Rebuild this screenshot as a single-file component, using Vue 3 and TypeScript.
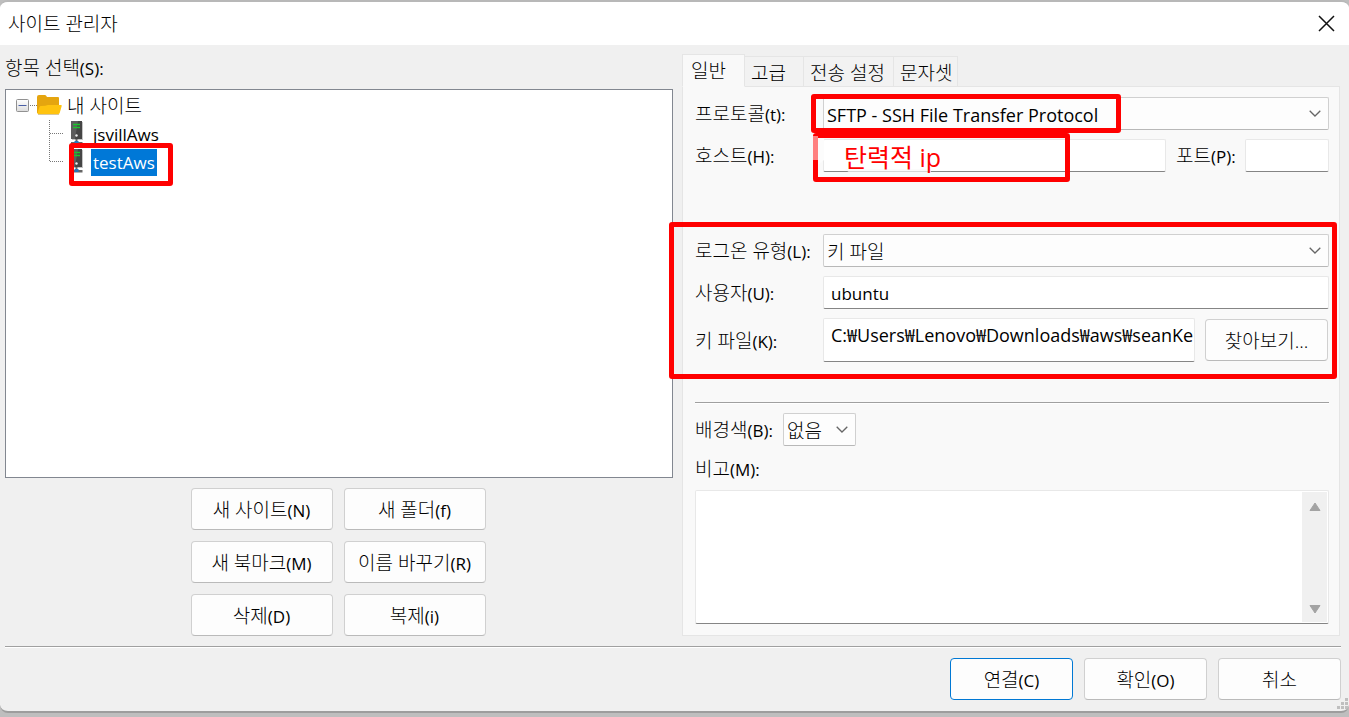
<script setup lang="ts">
import { ref } from 'vue'

interface Action {
  text: string
  mnemonic: string
  primary?: boolean
}

const sites = ['jsvillAws', 'testAws']
const selectedSite = ref('testAws')

const siteActions: Action[] = [
  { text: '새 사이트', mnemonic: '(N)' },
  { text: '새 폴더', mnemonic: '(f)' },
  { text: '새 북마크', mnemonic: '(M)' },
  { text: '이름 바꾸기', mnemonic: '(R)' },
  { text: '삭제', mnemonic: '(D)' },
  { text: '복제', mnemonic: '(i)' },
]

const dialogActions: Action[] = [
  { text: '연결', mnemonic: '(C)', primary: true },
  { text: '확인', mnemonic: '(O)' },
  { text: '취소', mnemonic: '' },
]

const tabs = [
  { text: '일반', size: 'w1' },
  { text: '고급', size: 'w2' },
  { text: '전송 설정', size: 'w3' },
  { text: '문자셋', size: 'w4' },
]
const activeTab = ref('일반')

const host = ref('')
const port = ref('')
const user = ref('ubuntu')
const keyFile = ref('C:₩Users₩Lenovo₩Downloads₩aws₩seanKey')
const notes = ref('')
</script>

<template>
  <div class="desktop">
    <main class="dialog">
      <header class="titlebar">
        <h1>사이트 관리자</h1>
        <button class="close" type="button" aria-label="닫기">
          <svg width="17" height="17" viewBox="0 0 17 17">
            <path d="M1 1L16 16M16 1L1 16" fill="none" stroke="#111" stroke-width="1.5" />
          </svg>
        </button>
      </header>

      <div class="columns">
        <section class="left">
          <h2 id="tree-label">항목 선택<span class="mn">(S):</span></h2>
          <ul class="tree" role="tree" aria-labelledby="tree-label">
            <li role="treeitem" aria-expanded="true">
              <div class="node root">
                <svg width="21" height="28" viewBox="0 0 21 28">
                  <defs>
                    <linearGradient id="expander" x1="0" y1="0" x2="0" y2="1">
                      <stop offset="0" stop-color="#fff" />
                      <stop offset="1" stop-color="#dcdcdc" />
                    </linearGradient>
                  </defs>
                  <rect x=".5" y="7.500" width="12" height="12" rx="1" fill="url(#expander)" stroke="#919191" />
                  <path d="M2.500 13.500h8" stroke="#4a5fa5" />
                  <path d="M14 13.500h7" stroke="#777" stroke-dasharray="1 1" />
                </svg>
                <svg width="25" height="28" viewBox="0 0 25 28">
                  <path d="M0 5q0-2 2-2h6q1 0 2 2h11q1 0 1 1v15H0z" fill="#e5a50f" />
                  <path d="M4 14q5 0 7-1h13q1 0 .7 1l-2 7q-.4 1-1.500 1H1.500Q0 22 .4 21l2-6q.4-1 1.600-1z" fill="#ffc30f" />
                  <path d="M1 22.500h21" stroke="#d7c69b" />
                </svg>
                <span class="name">내 사이트</span>
              </div>
              <ul role="group">
                <li
                  v-for="(site, i) in sites"
                  :key="site"
                  role="treeitem"
                  class="child"
                  :aria-selected="site === selectedSite"
                  @click="selectedSite = site"
                >
                  <div class="node">
                    <svg width="20" height="28" viewBox="0 0 20 28">
                      <path
                        :d="i < sites.length - 1 ? 'M.5 0V28' : 'M.5 0V14'"
                        stroke="#777"
                        stroke-dasharray="1 1"
                      />
                      <path d="M1 13.500h14" stroke="#777" stroke-dasharray="1 1" />
                    </svg>
                    <svg width="16" height="28" viewBox="0 0 16 28">
                      <path d="M3 2h11v18H3z" fill="#c4c4c4" />
                      <path d="M2 1h11v18H2z" fill="#454545" />
                      <path d="M2 1h7L6 19H2z" fill="#5c5c5c" />
                      <path d="M4 4.500h7M4 7.500h7" stroke="#19c52b" stroke-width="1.500" />
                      <circle cx="7.500" cy="15.500" r="1.200" fill="#eee" />
                      <path d="M6.500 19h2v3h5v2.500H2V22h4.500z" fill="#666" />
                      <path d="M5.500 21h4v3h-4z" fill="#2477ba" />
                    </svg>
                    <span class="latin" :class="{ selected: site === selectedSite }">{{ site }}</span>
                  </div>
                  <i v-if="site === 'testAws'" class="mark mark-site"></i>
                </li>
              </ul>
            </li>
          </ul>
          <div class="site-actions">
            <button v-for="a in siteActions" :key="a.text" type="button" class="btn">
              <span>{{ a.text }}<span class="mn">{{ a.mnemonic }}</span></span>
            </button>
          </div>
        </section>

        <section class="right">
          <div class="tabs" role="tablist">
            <button
              v-for="t in tabs"
              :key="t.text"
              type="button"
              role="tab"
              :aria-selected="t.text === activeTab"
              :class="['tab', t.size, { active: t.text === activeTab }]"
              @click="activeTab = t.text"
            >
              {{ t.text }}
            </button>
          </div>

          <form class="panel" @submit.prevent>
            <div class="rows server">
              <div class="row">
                <label for="protocol">프로토콜<span class="mn">(t):</span></label>
                <div class="combo grow">
                  <select id="protocol" class="wide"><option>SFTP - SSH File Transfer Protocol</option></select>
                  <svg class="chev" width="12" height="7" viewBox="0 0 12 7"><path d="M.7.700L6 6L11.300.700" /></svg>
                  <i class="mark mark-protocol"></i>
                </div>
              </div>
              <div class="row">
                <label for="host">호스트<span class="mn">(H):</span></label>
                <div class="host grow">
                  <input id="host" v-model="host" type="text" />
                  <div class="mark mark-host">
                    <svg class="smear" width="130" height="49" viewBox="0 0 130 49">
                      <path d="M0 3h5v24H0z" fill="#fff" fill-opacity=".5" />
                      <path d="M5 5h6v22l-6 5z" fill="#fcfcfc" />
                      <path d="M32 36h86v4H60l-14 4-6-1z" fill="#fafafa" fill-opacity=".7" />
                    </svg>
                    <span>탄력적 ip</span>
                  </div>
                </div>
                <label for="port" class="port-label">포트<span class="mn">(P):</span></label>
                <input id="port" v-model="port" class="port" type="text" />
              </div>
            </div>

            <div class="rows logon">
              <div class="row">
                <label for="logon">로그온 유형<span class="mn">(L):</span></label>
                <div class="combo grow">
                  <select id="logon"><option>키 파일</option></select>
                  <svg class="chev" width="12" height="7" viewBox="0 0 12 7"><path d="M.7.700L6 6L11.300.700" /></svg>
                </div>
              </div>
              <div class="row">
                <label for="user">사용자<span class="mn">(U):</span></label>
                <input id="user" v-model="user" class="grow" type="text" />
              </div>
              <div class="row">
                <label for="key">키 파일<span class="mn">(K):</span></label>
                <input id="key" v-model="keyFile" class="grow tall wide" type="text" />
                <button type="button" class="btn browse">찾아보기...</button>
              </div>
              <i class="mark mark-logon"></i>
            </div>

            <hr />

            <div class="color-row">
              <label for="color">배경색<span class="mn">(B):</span></label>
              <div class="combo">
                <select id="color"><option>없음</option></select>
                <svg class="chev" width="12" height="7" viewBox="0 0 12 7"><path d="M.7.700L6 6L11.300.700" /></svg>
              </div>
            </div>
            <label for="notes" class="notes-label">비고<span class="mn">(M):</span></label>
            <div class="notes">
              <textarea id="notes" v-model="notes"></textarea>
              <div class="scroll">
                <svg width="12" height="10" viewBox="0 0 12 10"><path d="M6 1L11 8.500H1z" /></svg>
                <svg width="12" height="10" viewBox="0 0 12 10"><path d="M6 9L11 1.500H1z" /></svg>
              </div>
            </div>
          </form>
        </section>
      </div>

      <footer>
        <button
          v-for="a in dialogActions"
          :key="a.text"
          type="button"
          :class="['btn', { primary: a.primary }]"
        >
          <span>{{ a.text }}<span class="mn">{{ a.mnemonic }}</span></span>
        </button>
      </footer>
      <svg class="grip" width="12" height="12" viewBox="0 0 12 12" fill="#bfbfbf">
        <path d="M8 0h3v3H8zM4 4h3v3H4zM8 4h3v3H8zM0 8h3v3H0zM4 8h3v3H4zM8 8h3v3H8z" />
      </svg>
    </main>
  </div>
</template>

<style>
body {
  margin: 0;
  background: #bebebe;
}
</style>

<style scoped>
* {
  box-sizing: border-box;
}
.desktop {
  min-height: 100vh;
  display: flex;
  padding-bottom: 5px;
  background: #bebebe;
  color: #000;
  font: 300 19px/24px 'Open Sans', 'Noto Sans CJK KR', sans-serif;
}
button,
input,
select,
textarea {
  font: inherit;
  color: inherit;
  margin: 0;
}
.mn,
.latin,
input {
  font-size: 17px;
  font-weight: 400;
}
h1,
h2 {
  margin: 0;
  font: inherit;
}
ul {
  list-style: none;
  margin: 0;
  padding: 0;
}
.dialog {
  position: relative;
  flex: 1;
  display: flex;
  flex-direction: column;
  background: #f0f0f0;
  border-top: 2px solid #b8b8b8;
  border-bottom: 2px solid #9d9d9d;
  border-radius: 8px;
  overflow: hidden;
}
.titlebar {
  height: 43px;
  display: flex;
  align-items: center;
  justify-content: space-between;
  padding: 0 14px 0 8px;
  background: #fff;
}
.close {
  display: flex;
  padding: 0;
  border: 0;
  background: none;
}
.columns {
  flex: 1;
  display: flex;
  gap: 9px;
  padding: 0 9px 10px 5px;
}
.left {
  flex: 668 1 0;
  min-width: 0;
  display: flex;
  flex-direction: column;
}
.left h2 {
  height: 44px;
  padding-top: 11px;
}
.tree {
  flex: 1;
  padding: 2px 0 0 10px;
  border: 1px solid #828790;
  background: #fff;
}
.node {
  display: flex;
  height: 28px;
  align-items: center;
}
.node svg {
  flex: none;
}
.name {
  padding-left: 5px;
}
.child {
  position: relative;
  margin-left: 33px;
}
.child .latin {
  height: 27px;
  line-height: 27px;
  margin-left: 6px;
  padding: 0 2px;
}
.child .selected {
  background: #0078d7;
  color: #fff;
}
.site-actions {
  display: grid;
  grid-template-columns: 142px 142px;
  justify-content: center;
  gap: 11px;
  padding: 10px 2px 0 0;
}
.btn {
  height: 42px;
  padding: 2px 0 0;
  border: 1px solid #d0d0d0;
  border-bottom-color: #bababa;
  border-radius: 4px;
  background: #fdfdfd;
}
.btn.primary {
  border-color: #0078d4;
}
.right {
  flex: 658 1 0;
  min-width: 0;
  display: flex;
  flex-direction: column;
  padding-top: 9px;
}
.tabs {
  display: flex;
  align-items: flex-end;
  height: 33px;
  margin-bottom: -1px;
}
.tab {
  height: 31px;
  padding: 2px 0 0 6px;
  text-align: left;
  border: 1px solid #e5e5e5;
  border-left: 0;
  background: #f2f2f2;
}
.tab.active {
  position: relative;
  height: 33px;
  padding: 0 0 0 8px;
  border-left: 1px solid #e5e5e5;
  border-bottom-color: #f9f9f9;
  background: #f9f9f9;
}
.w1 {
  width: 63px;
}
.w2 {
  width: 59px;
}
.w3 {
  width: 90px;
}
.w4 {
  width: 64px;
}
.panel {
  flex: 1;
  display: flex;
  flex-direction: column;
  padding: 10px 10px 11px 12px;
  border: 1px solid #e5e5e5;
  background: #f9f9f9;
}
.rows {
  display: flex;
  flex-direction: column;
  gap: 9px;
}
.row {
  display: flex;
  align-items: center;
}
.row > label:first-child {
  flex: none;
  width: 128px;
}
label {
  white-space: nowrap;
}
.row > label {
  padding-top: 2px;
}
.grow {
  flex: 1;
  min-width: 0;
}
.combo,
.host {
  position: relative;
}
select {
  display: block;
  appearance: none;
  width: 100%;
  height: 33px;
  padding: 2px 28px 0 3px;
  border: 1px solid #d0d0d0;
  border-bottom-color: #b8b8b8;
  border-radius: 2px;
  background: #fdfdfd;
}
.wide {
  font-size: 18px;
  font-weight: 400;
}
.chev {
  position: absolute;
  right: 8px;
  top: 13px;
  pointer-events: none;
}
.chev path {
  fill: none;
  stroke: #666;
  stroke-width: 1.3;
}
input {
  display: block;
  width: 100%;
  height: 33px;
  padding: 2px 1px 0 7px;
  border: 1px solid #e8e8e8;
  border-bottom-color: #858585;
  border-radius: 2px;
  background: #fff;
}
input.tall {
  height: 44px;
  padding-bottom: 14px;
}
.port-label {
  width: 79px;
  padding-left: 10px;
}
input.port {
  flex: none;
  width: 84px;
}
.logon {
  position: relative;
  margin-top: 62px;
}
.browse {
  width: 123px;
  margin: 0 1px 0 10px;
}
hr {
  width: 100%;
  height: 2px;
  margin: 40px 0 9px;
  border: 0;
  border-top: 1px solid #a0a0a0;
  background: #fff;
}
.color-row {
  display: flex;
  align-items: center;
}
.color-row label {
  width: 88px;
  padding-top: 2px;
}
.color-row .combo {
  width: 73px;
}
.notes-label {
  padding: 11px 0 8px;
}
.notes {
  flex: 1;
  display: flex;
  min-height: 134px;
  border: 1px solid #e8e8e8;
  border-bottom-color: #858585;
  border-radius: 2px;
  background: #fff;
}
textarea {
  flex: 1;
  border: 0;
  resize: none;
  background: transparent;
}
.scroll {
  width: 25px;
  margin: 1px 1px 1px 0;
  padding: 10px 0 8px;
  display: flex;
  flex-direction: column;
  align-items: center;
  justify-content: space-between;
  background: #f0f0f0;
}
.scroll path {
  fill: #a3a3a3;
  stroke: #a3a3a3;
  stroke-linejoin: round;
}
footer {
  display: flex;
  justify-content: flex-end;
  gap: 11px;
  margin: 0 8px 0 5px;
  padding: 11px 0;
  border-top: 1px solid #a0a0a0;
  box-shadow: inset 0 1px #fff;
}
footer .btn {
  width: 123px;
}
.grip {
  position: absolute;
  right: 0;
  bottom: 1px;
}
.mark {
  position: absolute;
  border: 5px solid #f00;
  border-radius: 3px;
  pointer-events: none;
}
.mark-site {
  left: 20px;
  top: -5px;
  width: 104px;
  height: 43px;
}
.mark-protocol {
  left: -12px;
  top: -3px;
  width: 310px;
  height: 39px;
}
.mark-host {
  left: -10px;
  top: -6px;
  width: 257px;
  height: 49px;
  padding-left: 26px;
  color: #f00;
  font-size: 25px;
  font-weight: 400;
  line-height: 38px;
}
.smear {
  position: absolute;
  left: -5px;
  top: -5px;
}
.mark-host span {
  position: relative;
}
.mark-logon {
  left: -26px;
  right: -8px;
  top: -12px;
  bottom: -17px;
}
</style>
